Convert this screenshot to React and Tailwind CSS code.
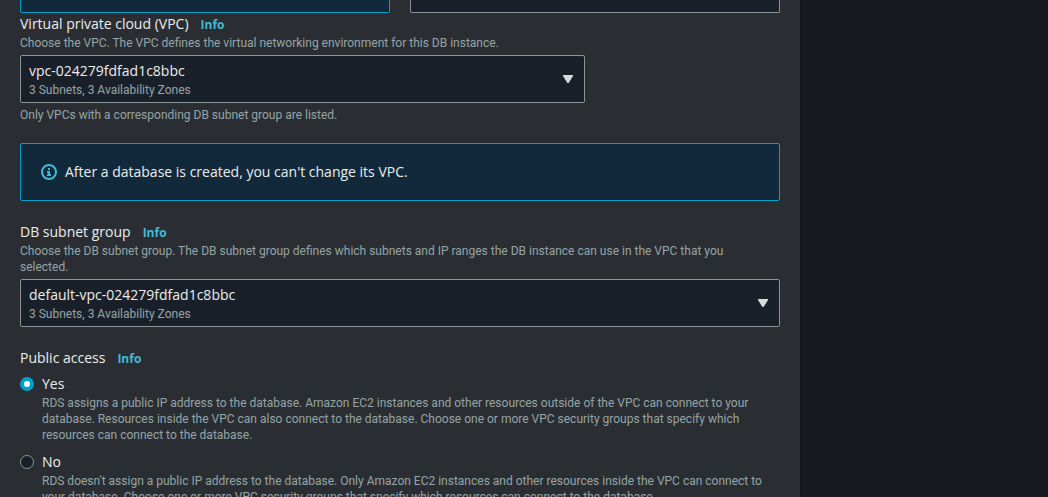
import React from "react";

const hintClass = "font-['Roboto','Noto_Sans',sans-serif] text-[12px] leading-4 text-[#95a5a6]";

function FieldLabel({ htmlFor, id, children }) {
  const Label = htmlFor ? "label" : "span";
  return (
    <div className="flex h-[22px] items-baseline gap-3 leading-[22px]">
      <Label id={id} htmlFor={htmlFor} className="text-[14px]">
        {children}
      </Label>
      <a href="#info" className="text-[12px] font-bold text-[#44b9d6]">
        Info
      </a>
    </div>
  );
}

function SelectBox({ id, value, detail }) {
  return (
    <div className="grid grid-cols-1 items-center text-[#eaeded]">
      <select
        id={id}
        aria-describedby={`${id}-detail`}
        className="col-start-1 row-start-1 h-12 w-full appearance-none rounded-[2px] border border-[#879596] bg-[#1a2029] px-2 pb-[18px] text-[14px]"
      >
        <option>{value}</option>
      </select>
      <span
        id={`${id}-detail`}
        className={`${hintClass} pointer-events-none col-start-1 row-start-1 self-end px-[9px] pb-[5px]`}
      >
        {detail}
      </span>
      <svg
        viewBox="0 0 10 8"
        className="pointer-events-none col-start-1 row-start-1 mr-3 h-2 w-[10px] justify-self-end"
        fill="#d5dbdb"
        aria-hidden="true"
      >
        <path d="M0 0h10v1L5.6 8H4.4L0 1z" />
      </svg>
    </div>
  );
}

function RadioOption({ id, label, defaultChecked, children }) {
  return (
    <div className="flex gap-2">
      <input
        type="radio"
        name="public-access"
        id={id}
        defaultChecked={defaultChecked}
        aria-describedby={`${id}-hint`}
        className="mt-1 size-[14px] shrink-0 appearance-none rounded-full border border-[#879596] bg-[#1a2029] checked:border-4 checked:border-[#00a1c9] checked:bg-white"
      />
      <div>
        <label htmlFor={id} className="block text-[14px] leading-[22px]">
          {label}
        </label>
        <p id={`${id}-hint`} className={hintClass}>
          {children}
        </p>
      </div>
    </div>
  );
}

export default function App() {
  return (
    <div className="h-screen overflow-hidden bg-[#16191f] font-['Open_Sans','Noto_Sans',sans-serif] text-[#eaeded]">
      <main className="min-h-full w-full max-w-[801px] border-r border-[#121418] bg-[#2a2e33] px-5">
        <div className="grid grid-cols-2 gap-5">
          <div className="h-[13px] rounded-b-[2px] border border-t-0 border-[#00a1c9] bg-[#12293b]" />
          <div className="h-[13px] rounded-b-[2px] border border-t-0 border-[#879596] bg-[#1a2029]" />
        </div>

        <section>
          <FieldLabel htmlFor="vpc">Virtual private cloud (VPC)</FieldLabel>
          <p className={hintClass}>
            Choose the VPC. The VPC defines the virtual networking environment for this DB instance.
          </p>
          <div className="my-1 w-full max-w-[565px]">
            <SelectBox id="vpc" value="vpc-024279fdfad1c8bbc" detail="3 Subnets, 3 Availability Zones" />
          </div>
          <p className={hintClass}>Only VPCs with a corresponding DB subnet group are listed.</p>
        </section>

        <div
          role="note"
          className="my-5 flex items-center gap-2 rounded-[2px] border border-[#00a1c9] bg-[#12293b] px-5 py-[17px] text-[14px] leading-[22px]"
        >
          <svg viewBox="0 0 16 16" className="size-4 shrink-0" fill="none" stroke="#44b9d6" strokeWidth="2" aria-hidden="true">
            <circle cx="8" cy="8" r="7" />
            <path d="M8 11V8H6M10 11H6M8 4v2" />
          </svg>
          <p>After a database is created, you can't change its VPC.</p>
        </div>

        <section>
          <FieldLabel htmlFor="subnet-group">DB subnet group</FieldLabel>
          <p className={`${hintClass} mb-1 pr-8`}>
            Choose the DB subnet group. The DB subnet group defines which subnets and IP ranges the DB instance can use in
            the VPC that you selected.
          </p>
          <SelectBox
            id="subnet-group"
            value="default-vpc-024279fdfad1c8bbc"
            detail="3 Subnets, 3 Availability Zones"
          />
        </section>

        <section role="radiogroup" aria-labelledby="public-access-label" className="mt-5">
          <FieldLabel id="public-access-label">Public access</FieldLabel>
          <div className="mt-1 flex flex-col gap-2">
            <RadioOption id="public-yes" label="Yes" defaultChecked>
              RDS assigns a public IP address to the database. Amazon EC2 instances and other resources outside of the VPC
              can connect to your database. Resources inside the VPC can also connect to the database. Choose one or more
              VPC security groups that specify which resources can connect to the database.
            </RadioOption>
            <RadioOption id="public-no" label="No">
              RDS doesn't assign a public IP address to the database. Only Amazon EC2 instances and other resources inside
              the VPC can connect to your database. Choose one or more VPC security groups that specify which resources can
              connect to the database.
            </RadioOption>
          </div>
        </section>
      </main>
    </div>
  );
}
